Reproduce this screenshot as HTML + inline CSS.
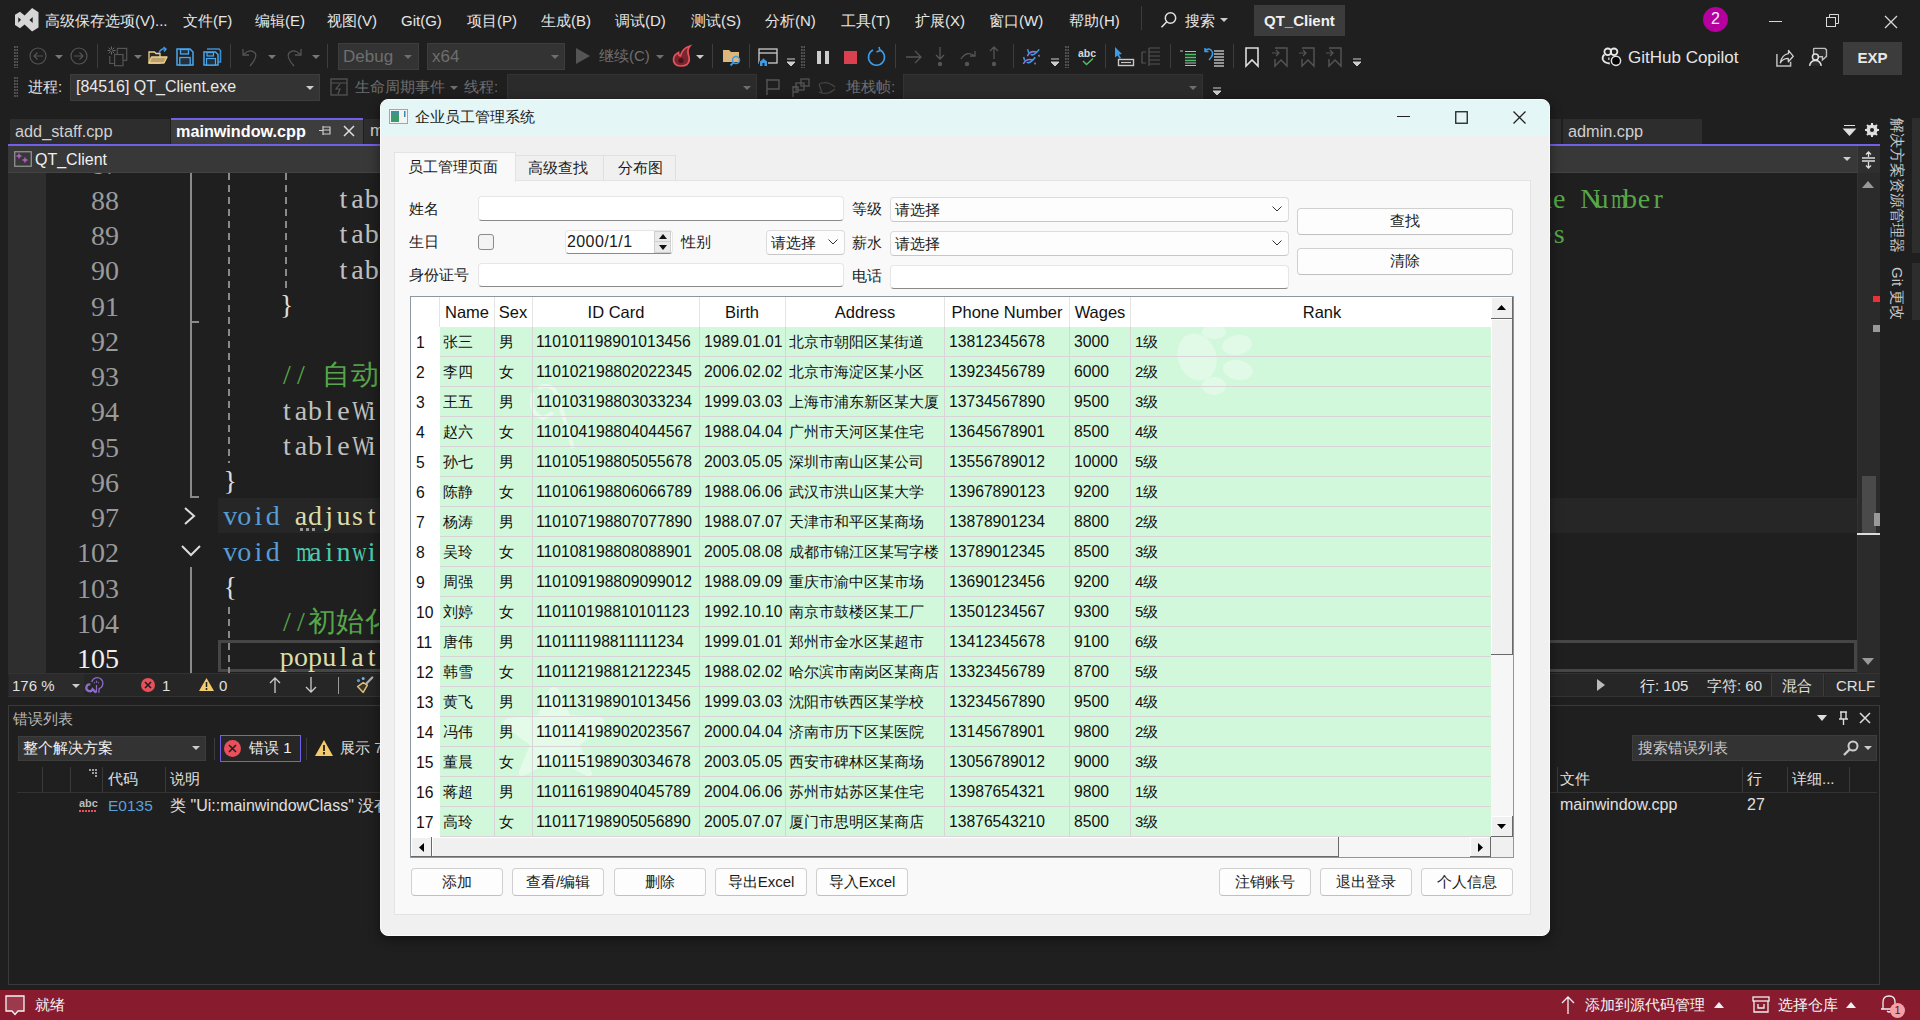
<!DOCTYPE html><html><head><meta charset="utf-8"><style>
*{box-sizing:border-box}
html,body{margin:0;padding:0}
body{width:1920px;height:1020px;overflow:hidden;position:relative;background:#1f1f1f;font-family:"Liberation Sans",sans-serif;color:#cccccc;font-size:15px}
.a{position:absolute;white-space:nowrap}
.b{position:absolute}
.mn{top:11px;font-size:15px;line-height:20px;color:#e6e6e6}
.tb{font-size:15px;line-height:20px}
.cb{position:absolute;background:#333333;border:1px solid #3d3d3d}
.sep{position:absolute;width:1px;background:#3d3d3d}
.code{font-family:"Liberation Mono",monospace;font-size:23px;line-height:35px}
.ln{font-family:"Liberation Serif",serif;font-size:28px;line-height:35px;color:#858585;text-align:right;width:60px}
svg{position:absolute;overflow:visible}
</style></head><body>
<svg style="left:10px;top:4px" width="34" height="32" viewBox="0 0 34 32"><path d="M5 10.7 L10 7.7 L14.6 11.6 L22.1 4.1 L28.5 8.15 V23.5 L22.1 27.6 L14.6 20.4 L10 24.3 L5 21 Z M8.3 13.2 L11 15.8 L8.3 18.8 Z M22.7 12.9 L19.4 16 L22.7 19.1 Z" fill="#d6d6d6" fill-rule="evenodd"/></svg>
<div class="a mn" style="left:45px">高级保存选项(V)...</div>
<div class="a mn" style="left:183px">文件(F)</div>
<div class="a mn" style="left:255px">编辑(E)</div>
<div class="a mn" style="left:327px">视图(V)</div>
<div class="a mn" style="left:401px">Git(G)</div>
<div class="a mn" style="left:467px">项目(P)</div>
<div class="a mn" style="left:541px">生成(B)</div>
<div class="a mn" style="left:615px">调试(D)</div>
<div class="a mn" style="left:691px">测试(S)</div>
<div class="a mn" style="left:765px">分析(N)</div>
<div class="a mn" style="left:841px">工具(T)</div>
<div class="a mn" style="left:915px">扩展(X)</div>
<div class="a mn" style="left:989px">窗口(W)</div>
<div class="a mn" style="left:1069px">帮助(H)</div>
<div class="sep" style="left:1141px;top:6px;height:24px"></div>
<svg style="left:1160px;top:11px" width="18" height="18" viewBox="0 0 18 18"><circle cx="10.5" cy="7" r="5.2" fill="none" stroke="#e0e0e0" stroke-width="1.5"/><path d="M6.8 10.8 L1.5 16.2" stroke="#e0e0e0" stroke-width="1.6"/></svg>
<div class="a mn" style="left:1185px">搜索</div>
<svg style="left:1220px;top:18px" width="8" height="5"><path d="M0 0 H8 L4 4 Z" fill="#cccccc"/></svg>
<div class="b" style="left:1254px;top:5px;width:91px;height:31px;background:#3c3c3c"></div>
<div class="a" style="left:1264px;top:11px;font-size:15px;line-height:20px;font-weight:bold;color:#f0f0f0">QT_Client</div>
<div class="b" style="left:1703px;top:7px;width:25px;height:25px;border-radius:50%;background:#b5009f"></div>
<div class="a" style="left:1703px;top:9px;width:25px;text-align:center;font-size:16px;line-height:20px;color:#f4f4f4">2</div>
<div class="b" style="left:1769px;top:21px;width:13px;height:1px;background:#d8d8d8"></div>
<svg style="left:1826px;top:14px" width="14" height="14" viewBox="0 0 14 14"><rect x="0.5" y="3.5" width="9" height="9" fill="none" stroke="#d8d8d8" stroke-width="1"/><path d="M3.5 3.5 V0.5 H12.5 V9.5 H9.5" fill="none" stroke="#d8d8d8" stroke-width="1"/></svg>
<svg style="left:1884px;top:15px" width="14" height="14" viewBox="0 0 14 14"><path d="M1 1 L13 13 M13 1 L1 13" stroke="#d8d8d8" stroke-width="1.3"/></svg>
<div class="b" style="left:14px;top:46px;width:4px;height:22px;background:radial-gradient(circle at 1px 1px,#555 0 0.9px,transparent 1px) 0 0/2.5px 3px"></div>
<svg style="left:29px;top:47px" width="18" height="18" viewBox="0 0 18 18"><circle cx="9" cy="9" r="8" fill="none" stroke="#555" stroke-width="1.2"/><path d="M14 9 H5 M8.5 5.5 L5 9 L8.5 12.5" fill="none" stroke="#555" stroke-width="1.2"/></svg>
<svg style="left:70px;top:47px" width="18" height="18" viewBox="0 0 18 18"><circle cx="9" cy="9" r="8" fill="none" stroke="#555" stroke-width="1.2"/><path d="M4 9 H13 M9.5 5.5 L13 9 L9.5 12.5" fill="none" stroke="#555" stroke-width="1.2"/></svg>
<svg style="left:55px;top:55px" width="8" height="5"><path d="M0 0 H8 L4 4 Z" fill="#777"/></svg>
<div class="sep" style="left:97px;top:44px;height:24px"></div>
<svg style="left:107px;top:46px" width="22" height="22" viewBox="0 0 22 22"><path d="M5.70 4.50 L8.50 4.50 M5.35 5.35 L7.33 7.33 M4.50 5.70 L4.50 8.50 M3.65 5.35 L1.67 7.33 M3.30 4.50 L0.50 4.50 M3.65 3.65 L1.67 1.67 M4.50 3.30 L4.50 0.50 M5.35 3.65 L7.33 1.67 " stroke="#6a6a6a" stroke-width="1"/><rect x="10.3" y="2.4" width="9.4" height="11.9" fill="none" stroke="#555" stroke-width="1.2"/><rect x="7.6" y="8.5" width="8.4" height="11.2" fill="#1f1f1f" stroke="#555" stroke-width="1.2"/><path d="M2.8 10 V17.5 H7.6" fill="none" stroke="#555" stroke-width="1.2"/></svg>
<svg style="left:134px;top:55px" width="8" height="5"><path d="M0 0 H8 L4 4 Z" fill="#777"/></svg>
<svg style="left:148px;top:47px" width="20" height="18" viewBox="0 0 20 18"><path d="M1 5 H6.5 L8 6.5 H12 V16 H1 Z" fill="#2a2a2a" stroke="#f0d08c" stroke-width="1.3"/><path d="M3.5 10 H19 L16 16 H1 Z" fill="#b8a070" stroke="#f0d08c" stroke-width="1.3" stroke-linejoin="round"/><path d="M11 6 Q13 1 18 2 M15.5 0 L18 2 L16 4.5" fill="none" stroke="#3c9ce8" stroke-width="1.5"/></svg>
<svg style="left:176px;top:48px" width="18" height="18" viewBox="0 0 18 18"><path d="M1 1 H14 L17 4 V17 H1 Z" fill="#1f1f1f" stroke="#4aa8f0" stroke-width="1.5"/><rect x="4.5" y="1.5" width="8" height="4.5" fill="#24313b" stroke="#4aa8f0" stroke-width="1.3"/><rect x="3.8" y="9.5" width="10.4" height="7.5" fill="#24313b" stroke="#4aa8f0" stroke-width="1.3"/></svg>
<svg style="left:203px;top:48px" width="18" height="18" viewBox="0 0 18 18"><path d="M4 1 H16 L17.5 2.5 V14 H15" fill="none" stroke="#3d8fd0" stroke-width="1.6"/><path d="M1 4 H12.5 L15 6.5 V17 H1 Z" fill="#1f1f1f" stroke="#4aa8f0" stroke-width="1.5"/><rect x="4" y="4.5" width="6.5" height="3.5" fill="#24313b" stroke="#4aa8f0" stroke-width="1.2"/><rect x="3.5" y="10.5" width="9" height="6.5" fill="#24313b" stroke="#4aa8f0" stroke-width="1.2"/></svg>
<div class="sep" style="left:230px;top:44px;height:24px"></div>
<svg style="left:241px;top:47px" width="18" height="20" viewBox="0 0 18 20"><path d="M2 2 V8 H8" fill="none" stroke="#555" stroke-width="1.3"/><path d="M2.5 7.5 Q9 1 14 6 Q17 10 9 19" fill="none" stroke="#555" stroke-width="1.3"/></svg>
<svg style="left:268px;top:55px" width="8" height="5"><path d="M0 0 H8 L4 4 Z" fill="#777"/></svg>
<svg style="left:285px;top:47px" width="18" height="20" viewBox="0 0 18 20"><path d="M16 2 V8 H10" fill="none" stroke="#555" stroke-width="1.3"/><path d="M15.5 7.5 Q9 1 4 6 Q1 10 9 19" fill="none" stroke="#555" stroke-width="1.3"/></svg>
<svg style="left:312px;top:55px" width="8" height="5"><path d="M0 0 H8 L4 4 Z" fill="#777"/></svg>
<div class="sep" style="left:327px;top:44px;height:24px"></div>
<div class="cb" style="left:338px;top:43px;width:81px;height:27px"></div>
<div class="a" style="left:343px;top:47px;font-size:17px;line-height:20px;color:#6e6e6e">Debug</div>
<svg style="left:404px;top:55px" width="8" height="5"><path d="M0 0 H8 L4 4 Z" fill="#6e6e6e"/></svg>
<div class="cb" style="left:427px;top:43px;width:138px;height:27px"></div>
<div class="a" style="left:432px;top:47px;font-size:17px;line-height:20px;color:#6e6e6e">x64</div>
<svg style="left:551px;top:55px" width="8" height="5"><path d="M0 0 H8 L4 4 Z" fill="#6e6e6e"/></svg>
<svg style="left:576px;top:48px" width="14" height="16"><path d="M0 0 L14 8 L0 16 Z" fill="#555"/></svg>
<div class="a tb" style="left:599px;top:46px;color:#6e6e6e">继续(C)</div>
<svg style="left:656px;top:55px" width="8" height="5"><path d="M0 0 H8 L4 4 Z" fill="#6e6e6e"/></svg>
<svg style="left:672px;top:45px" width="20" height="22" viewBox="0 0 20 22"><path d="M8.5 21 C3.5 21 1.2 17.5 1.5 14 C1.8 10.5 4.5 8.5 6.5 7.5 C6.5 9.5 7.5 11 8.5 11 C9.5 7 12.5 2.5 18 1 C15.5 4 15.5 7 16.5 10 C17.5 13 17.5 17 15 19.5 C13 21 10.5 21 8.5 21 Z" fill="#7a2630" stroke="#e8505b" stroke-width="1.7"/><circle cx="9" cy="15.5" r="2.6" fill="#4a1218"/></svg>
<svg style="left:696px;top:55px" width="8" height="5"><path d="M0 0 H8 L4 4 Z" fill="#ccc"/></svg>
<div class="sep" style="left:712px;top:44px;height:24px"></div>
<svg style="left:722px;top:48px" width="20" height="18" viewBox="0 0 20 18"><path d="M1 2 H7 L9 4 H17 V14 H1 Z" fill="#dcb67a"/><circle cx="14" cy="12" r="3.5" fill="none" stroke="#3c9ce8" stroke-width="1.5"/><path d="M11.5 14.5 L8.5 17.5" stroke="#3c9ce8" stroke-width="1.8"/></svg>
<div class="sep" style="left:749px;top:44px;height:24px"></div>
<svg style="left:758px;top:48px" width="20" height="19" viewBox="0 0 20 19"><rect x="1" y="1" width="18" height="14" fill="none" stroke="#ccc" stroke-width="1.3"/><path d="M1 5 H19" stroke="#ccc" stroke-width="1.3"/><path d="M1.5 18.5 V13.5 L5.5 10 L9.5 13.5 V18.5 Z" fill="#3c9ce8" stroke="#1f1f1f" stroke-width="1"/><rect x="4.5" y="15" width="2" height="3.5" fill="#1f1f1f"/></svg>
<svg style="left:787px;top:59px" width="8" height="8"><path d="M0 0 H8 M0 3 H8 L4 7 Z" stroke="#ccc" fill="#ccc" stroke-width="1"/></svg>
<div class="b" style="left:801px;top:46px;width:4px;height:22px;background:radial-gradient(circle at 1px 1px,#555 0 0.9px,transparent 1px) 0 0/2.5px 3px"></div>
<div class="b" style="left:817px;top:51px;width:4px;height:13px;background:#ccc"></div><div class="b" style="left:825px;top:51px;width:4px;height:13px;background:#ccc"></div>
<div class="b" style="left:844px;top:51px;width:13px;height:13px;background:#d94050"></div>
<svg style="left:867px;top:47px" width="20" height="20" viewBox="0 0 20 20"><path d="M13 3 A8 8 0 1 1 6 3" fill="none" stroke="#3c9ce8" stroke-width="1.6"/><path d="M12 0 L13 3.5 L9.5 5" fill="none" stroke="#3c9ce8" stroke-width="1.6"/></svg>
<div class="sep" style="left:895px;top:44px;height:24px"></div>
<svg style="left:905px;top:50px" width="18" height="14"><path d="M1 7 H16 M10 1 L16 7 L10 13" fill="none" stroke="#555" stroke-width="1.3"/></svg>
<svg style="left:934px;top:46px" width="12" height="22"><path d="M6 1 V13 M2 9 L6 13 L10 9" fill="none" stroke="#555" stroke-width="1.3"/><circle cx="6" cy="18" r="2.2" fill="#555"/></svg>
<svg style="left:958px;top:48px" width="20" height="20"><path d="M3 11 Q9 2 17 8 M17 3 V8 H12" fill="none" stroke="#555" stroke-width="1.3"/><circle cx="9" cy="16" r="2.2" fill="#555"/></svg>
<svg style="left:988px;top:46px" width="12" height="22"><path d="M6 13 V1 M2 5 L6 1 L10 5" fill="none" stroke="#555" stroke-width="1.3"/><circle cx="6" cy="18" r="2.2" fill="#555"/></svg>
<div class="sep" style="left:1013px;top:44px;height:24px"></div>
<svg style="left:1018px;top:44px" width="28" height="24" viewBox="0 0 28 24"><path d="M9.4 12.2 Q12 6 19 8.2" fill="none" stroke="#9a6fd8" stroke-width="1.5"/><path d="M20.6 10.8 L21.5 12.6" stroke="#9a6fd8" stroke-width="1.5"/><path d="M12.7 10.4 Q16 12.5 21.2 5.4" fill="none" stroke="#3c9ce8" stroke-width="1.6"/><path d="M9.6 5.2 L10.7 8.8" stroke="#3c9ce8" stroke-width="1.5"/><path d="M5.4 20.0 Q8 13.8 15 16.0" fill="none" stroke="#9a6fd8" stroke-width="1.5"/><path d="M16.6 18.6 L17.5 20.4" stroke="#9a6fd8" stroke-width="1.5"/><path d="M8.7 18.2 Q12 20.3 17.2 13.2" fill="none" stroke="#3c9ce8" stroke-width="1.6"/><path d="M5.6 13.0 L6.699999999999999 16.6" stroke="#3c9ce8" stroke-width="1.5"/></svg>
<svg style="left:1051px;top:59px" width="8" height="8"><path d="M0 0 H8 M0 3 H8 L4 7 Z" stroke="#ccc" fill="#ccc" stroke-width="1"/></svg>
<div class="b" style="left:1065px;top:46px;width:4px;height:22px;background:radial-gradient(circle at 1px 1px,#555 0 0.9px,transparent 1px) 0 0/2.5px 3px"></div>
<div class="a" style="left:1078px;top:47px;font-size:10.5px;line-height:12px;font-weight:bold;color:#d8d8d8">abc</div>
<svg style="left:1082px;top:58px" width="14" height="8"><path d="M1 3 L4.5 6.5 L11 0.5" fill="none" stroke="#4cbf6a" stroke-width="1.5"/></svg>
<div class="sep" style="left:1105px;top:44px;height:24px"></div>
<svg style="left:1114px;top:47px" width="22" height="20" viewBox="0 0 22 20"><path d="M1 0 L8 7 L5 7.5 L7 11 L5.5 11.8 L3.5 8.5 L1 10.5 Z" fill="#3c9ce8"/><rect x="4.5" y="12.5" width="15" height="6" fill="none" stroke="#c8c8c8" stroke-width="1.4"/><path d="M7 15.5 H17" stroke="#c8c8c8" stroke-width="1.2"/></svg>
<svg style="left:1141px;top:47px" width="20" height="20"><path d="M1 5 H5 M1 5 V16 H5 M8 1 H19 M8 5 H19 M8 9 H19 M8 13 H19 M8 17 H19 M8 1 V19" fill="none" stroke="#555" stroke-width="1.2"/></svg>
<div class="sep" style="left:1170px;top:44px;height:24px"></div>
<svg style="left:1180px;top:50px" width="17" height="16" viewBox="0 0 17 16"><path d="M0 1 H3 M5 1.5 H16" stroke="#bbb" stroke-width="1.2"/><path d="M5 4.5 H16 M5 7.5 H16 M5 10.5 H16" stroke="#4cbf6a" stroke-width="1.6"/><path d="M5 13 H16 M5 15.5 H16" stroke="#bbb" stroke-width="1.2"/></svg>
<svg style="left:1204px;top:47px" width="22" height="20" viewBox="0 0 22 20"><path d="M10 4 H20 M10 7 H20 M10 10 H20 M10 13 H20 M10 16 H20 M10 19 H20" stroke="#bbb" stroke-width="1.3"/><path d="M5 13 Q11 7 7 3 Q4 0.5 1 4 M1 1 V4.5 H4.5" fill="none" stroke="#3c9ce8" stroke-width="1.5"/></svg>
<div class="sep" style="left:1233px;top:44px;height:24px"></div>
<svg style="left:1245px;top:47px" width="14" height="20"><path d="M1 1 H13 V19 L7 13 L1 19 Z" fill="none" stroke="#ddd" stroke-width="1.6"/></svg>
<svg style="left:1272px;top:47px" width="16" height="20"><path d="M3 1 H15 V19 L9 13 L3 19 V12" fill="none" stroke="#555" stroke-width="1.4"/><path d="M0 6 H7 M4 3 L7 6 L4 9" fill="none" stroke="#555" stroke-width="1.2"/></svg>
<svg style="left:1299px;top:47px" width="16" height="20"><path d="M3 1 H15 V19 L9 13 L3 19 V12" fill="none" stroke="#555" stroke-width="1.4"/><path d="M0 6 H7 M4 3 L7 6 L4 9" fill="none" stroke="#555" stroke-width="1.2"/></svg>
<svg style="left:1326px;top:47px" width="16" height="20"><path d="M3 1 H15 V19 L9 13 L3 19 V12" fill="none" stroke="#555" stroke-width="1.4"/><path d="M0 6 H7 M4 3 L7 6 L4 9" fill="none" stroke="#555" stroke-width="1.2"/></svg>
<svg style="left:1353px;top:59px" width="8" height="8"><path d="M0 0 H8 M0 3 H8 L4 7 Z" stroke="#ccc" fill="#ccc" stroke-width="1"/></svg>
<svg style="left:1596px;top:42px" width="32" height="30" viewBox="0 0 32 30"><ellipse cx="11.8" cy="9.8" rx="3.4" ry="3.3" fill="none" stroke="#e8e8e8" stroke-width="1.8"/><ellipse cx="18" cy="9.8" rx="3.4" ry="3.3" fill="none" stroke="#e8e8e8" stroke-width="1.8"/><path d="M8.5 12.5 Q6 14.5 6.8 17.5 Q8 21 13.8 21.5" fill="none" stroke="#e8e8e8" stroke-width="1.8"/><rect x="12" y="15.5" width="1.6" height="2.4" fill="#bbb"/><circle cx="20" cy="18.8" r="4.6" fill="#000" stroke="#e0e0e0" stroke-width="1.5"/></svg>
<div class="a" style="left:1628px;top:48px;font-size:17px;line-height:20px;color:#e6e6e6">GitHub Copilot</div>
<svg style="left:1770px;top:42px" width="66" height="30" viewBox="0 0 66 30"><path d="M6.9 12 V24 H20.6 V19.8" fill="none" stroke="#bdbdbd" stroke-width="1.5"/><path d="M10.3 20.8 Q12 12.5 18.5 11.6 V8.3 L23.3 14.3 L18.3 19.8 V16.4 Q13 16.4 10.3 20.8 Z" fill="none" stroke="#d0d0d0" stroke-width="1.3" stroke-linejoin="round"/><path d="M43.6 13 V7 Q43.6 6.4 44.2 6.4 H55 L56.5 7.9 V14.4 L52.4 18 V14.8 H49" fill="#2b2b2b" stroke="#bdbdbd" stroke-width="1.4"/><circle cx="45.4" cy="15" r="3" fill="#2b2b2b" stroke="#e0e0e0" stroke-width="1.5"/><path d="M39.6 23.8 Q40.5 18.5 45.4 18.5 Q50.3 18.5 51.3 23.8" fill="#2b2b2b" stroke="#e0e0e0" stroke-width="1.5"/></svg>
<div class="b" style="left:1843px;top:42px;width:59px;height:33px;background:#3c3c3c"></div>
<div class="a" style="left:1843px;top:48px;width:59px;text-align:center;font-size:15px;line-height:20px;font-weight:bold;color:#e8e8e8">EXP</div>
<div class="b" style="left:14px;top:77px;width:4px;height:20px;background:radial-gradient(circle at 1px 1px,#555 0 0.9px,transparent 1px) 0 0/2.5px 3px"></div>
<div class="a tb" style="left:28px;top:77px;color:#e0e0e0">进程:</div>
<div class="cb" style="left:70px;top:74px;width:250px;height:27px;background:#333"></div>
<div class="a" style="left:76px;top:77px;font-size:16px;line-height:20px;color:#e8e8e8">[84516] QT_Client.exe</div>
<svg style="left:306px;top:86px" width="8" height="5"><path d="M0 0 H8 L4 4 Z" fill="#ccc"/></svg>
<svg style="left:330px;top:78px" width="18" height="18"><rect x="1" y="1" width="16" height="16" fill="none" stroke="#555" stroke-width="1.3"/><path d="M1 5 H17 M10 6 L6 11 H10 L8 16" fill="none" stroke="#555" stroke-width="1.2"/></svg>
<div class="a tb" style="left:355px;top:77px;color:#6e6e6e">生命周期事件</div>
<svg style="left:450px;top:86px" width="8" height="5"><path d="M0 0 H8 L4 4 Z" fill="#6e6e6e"/></svg>
<div class="a tb" style="left:464px;top:77px;color:#6e6e6e">线程:</div>
<div class="cb" style="left:507px;top:74px;width:250px;height:27px;background:#2b2b2b;border-color:#333"></div>
<svg style="left:743px;top:86px" width="8" height="5"><path d="M0 0 H8 L4 4 Z" fill="#6e6e6e"/></svg>
<svg style="left:765px;top:78px" width="18" height="18"><path d="M2 1 V17 M2 2 H14 V11 H2" fill="none" stroke="#555" stroke-width="1.4"/></svg>
<svg style="left:791px;top:78px" width="20" height="20"><rect x="10" y="1" width="8" height="7" fill="none" stroke="#555" stroke-width="1.3"/><rect x="5" y="5" width="8" height="7" fill="none" stroke="#555" stroke-width="1.3"/><path d="M2 8 V19 M2 9 H7 V14 H2" fill="none" stroke="#555" stroke-width="1.3"/></svg>
<svg style="left:818px;top:81px" width="18" height="14"><path d="M1 3 Q9 -1 17 6 M1 11 Q9 15 17 8 M1 3 L4 12" fill="none" stroke="#444" stroke-width="1.3"/></svg>
<div class="a tb" style="left:846px;top:77px;color:#6e6e6e">堆栈帧:</div>
<div class="cb" style="left:903px;top:74px;width:300px;height:27px;background:#2b2b2b;border-color:#333"></div>
<svg style="left:1189px;top:86px" width="8" height="5"><path d="M0 0 H8 L4 4 Z" fill="#6e6e6e"/></svg>
<svg style="left:1213px;top:88px" width="8" height="8"><path d="M0 0 H8 M0 3 H8 L4 7 Z" stroke="#ccc" fill="#ccc" stroke-width="1"/></svg>
<div class="b" style="left:10px;top:119px;width:160px;height:25px;background:#2d2d2d"></div>
<div class="a" style="left:15px;top:121px;font-size:16.3px;line-height:20px;color:#d0d0d0">add_staff.cpp</div>
<div class="b" style="left:171px;top:118px;width:192px;height:26px;background:#3d3d3d;border-top:2px solid #7160e8"></div>
<div class="a" style="left:176px;top:121px;font-size:16.2px;line-height:20px;font-weight:bold;color:#ffffff">mainwindow.cpp</div>
<svg style="left:319px;top:125px" width="12" height="11"><path d="M0 5.5 H4 M4 1 V10 M4 2 H11 V9 H4 M4 5 H11" fill="none" stroke="#ccc" stroke-width="1.2"/></svg>
<svg style="left:343px;top:125px" width="12" height="12"><path d="M1 1 L11 11 M11 1 L1 11" stroke="#ddd" stroke-width="1.5"/></svg>
<div class="b" style="left:364px;top:119px;width:20px;height:25px;background:#2d2d2d"></div>
<div class="a" style="left:370px;top:121px;font-size:17px;line-height:20px;color:#d0d0d0">m</div>
<div class="b" style="left:1540px;top:119px;width:21px;height:25px;background:#2d2d2d"></div>
<div class="b" style="left:1563px;top:119px;width:139px;height:25px;background:#2d2d2d"></div>
<div class="a" style="left:1568px;top:121px;font-size:16.3px;line-height:20px;color:#d0d0d0">admin.cpp</div>
<svg style="left:1844px;top:125px" width="11" height="12"><path d="M0 0.5 H11 M0 4 H11 L5.5 10 Z" stroke="#e0e0e0" fill="#e0e0e0" stroke-width="1.2"/></svg>
<svg style="left:1865px;top:123px" width="14" height="14" viewBox="0 0 14 14"><circle cx="7" cy="7" r="4.2" fill="none" stroke="#e0e0e0" stroke-width="2.6"/><path d="M7 0 V14 M0 7 H14 M2 2 L12 12 M12 2 L2 12" stroke="#e0e0e0" stroke-width="2"/><circle cx="7" cy="7" r="2" fill="#1f1f1f"/></svg>
<div class="b" style="left:8px;top:144px;width:1872px;height:2px;background:#7160e8"></div>
<div class="b" style="left:8px;top:146px;width:1849px;height:27px;background:#383838;border-bottom:1px solid #434343"></div>
<svg style="left:14px;top:151px" width="18" height="16"><rect x="0.75" y="0.75" width="16.5" height="14.5" fill="none" stroke="#999" stroke-width="1.2"/><path d="M5 2.5 V7.5 M2.5 5 H7.5 M11 6.5 V11.5 M8.5 9 H13.5" stroke="#c05ccf" stroke-width="1.4"/></svg>
<div class="a" style="left:35px;top:150px;font-size:16px;line-height:20px;color:#f0f0f0">QT_Client</div>
<svg style="left:1843px;top:157px" width="8" height="5"><path d="M0 0 H8 L4 4 Z" fill="#ccc"/></svg>
<div class="b" style="left:1857px;top:146px;width:23px;height:27px;background:#2f2f2f;border-left:1px solid #3d3d3d"></div>
<svg style="left:1861px;top:152px" width="15" height="16"><path d="M1 6 H14 M1 9 H14 M7.5 0 V5 M7.5 10 V16 M5 2.5 L7.5 0 L10 2.5 M5 13.5 L7.5 16 L10 13.5" fill="none" stroke="#ddd" stroke-width="1.3"/></svg>
<div class="b" style="left:8px;top:173px;width:38px;height:500px;background:#2e2e2e"></div>
<div class="b" style="left:218px;top:498px;width:170px;height:35px;background:#262626"></div>
<div class="b" style="left:218px;top:640px;width:170px;height:32px;border:3px solid #464646;border-right:none"></div>
<div class="b" style="left:1550px;top:640px;width:307px;height:32px;border:3px solid #464646;border-left:none"></div>
<div class="b" style="left:1550px;top:498px;width:307px;height:35px;background:#262626"></div>
<div class="b" style="left:46px;top:173px;width:342px;height:500px;overflow:hidden">
<div class="a ln" style="left:13px;top:-25.6px;color:#9a9a9a">87</div>
<div class="a ln" style="left:13px;top:9.7px;color:#9a9a9a">88</div>
<div class="a ln" style="left:13px;top:45.0px;color:#9a9a9a">89</div>
<div class="a ln" style="left:13px;top:80.2px;color:#9a9a9a">90</div>
<div class="a ln" style="left:13px;top:115.5px;color:#9a9a9a">91</div>
<div class="a ln" style="left:13px;top:150.7px;color:#9a9a9a">92</div>
<div class="a ln" style="left:13px;top:186.0px;color:#9a9a9a">93</div>
<div class="a ln" style="left:13px;top:221.3px;color:#9a9a9a">94</div>
<div class="a ln" style="left:13px;top:256.5px;color:#9a9a9a">95</div>
<div class="a ln" style="left:13px;top:291.8px;color:#9a9a9a">96</div>
<div class="a ln" style="left:13px;top:327.0px;color:#9a9a9a">97</div>
<div class="a ln" style="left:13px;top:362.3px;color:#9a9a9a">102</div>
<div class="a ln" style="left:13px;top:397.6px;color:#9a9a9a">103</div>
<div class="a ln" style="left:13px;top:432.8px;color:#9a9a9a">104</div>
<div class="a ln" style="left:13px;top:468.1px;color:#f0f0f0">105</div>
</div>
<div class="b" style="left:190px;top:173px;width:2px;height:149px;background:#8a8a8a"></div>
<div class="b" style="left:190px;top:321px;width:9px;height:2px;background:#8a8a8a"></div>
<div class="b" style="left:190px;top:323px;width:2px;height:175px;background:#8a8a8a"></div>
<div class="b" style="left:190px;top:496px;width:9px;height:2px;background:#8a8a8a"></div>
<div class="b" style="left:190px;top:567px;width:2px;height:106px;background:#8a8a8a"></div>
<svg style="left:184px;top:507px" width="12" height="18"><path d="M1 1 L10 9 L1 17" fill="none" stroke="#ddd" stroke-width="2"/></svg>
<svg style="left:181px;top:545px" width="20" height="12"><path d="M1 1 L10 10 L19 1" fill="none" stroke="#ddd" stroke-width="2"/></svg>
<div class="b" style="left:228px;top:173px;width:2px;height:290px;background:repeating-linear-gradient(#8a8a8a 0 7px,transparent 7px 12px)"></div>
<div class="b" style="left:285px;top:173px;width:2px;height:115px;background:repeating-linear-gradient(#8a8a8a 0 7px,transparent 7px 12px)"></div>
<div class="b" style="left:228px;top:607px;width:2px;height:66px;background:repeating-linear-gradient(#8a8a8a 0 7px,transparent 7px 12px)"></div>
<div class="b" style="left:0;top:173px;width:379px;height:500px;overflow:hidden"><div class="b" style="left:0;top:-173px;width:380px;height:673px;font-family:'Liberation Serif',serif;font-size:28px;line-height:35px">
<span class="a" style="left:336.3px;top:181.0px;width:14.2px;text-align:center;color:#c0c0c0;">t</span><span class="a" style="left:350.4px;top:181.0px;width:14.2px;text-align:center;color:#c0c0c0;">a</span><span class="a" style="left:364.6px;top:181.0px;width:14.2px;text-align:center;color:#c0c0c0;">b</span><span class="a" style="left:378.8px;top:181.0px;width:14.2px;text-align:center;color:#c0c0c0;">l</span>
<span class="a" style="left:336.3px;top:216.3px;width:14.2px;text-align:center;color:#c0c0c0;">t</span><span class="a" style="left:350.4px;top:216.3px;width:14.2px;text-align:center;color:#c0c0c0;">a</span><span class="a" style="left:364.6px;top:216.3px;width:14.2px;text-align:center;color:#c0c0c0;">b</span><span class="a" style="left:378.8px;top:216.3px;width:14.2px;text-align:center;color:#c0c0c0;">l</span>
<span class="a" style="left:336.3px;top:251.5px;width:14.2px;text-align:center;color:#c0c0c0;">t</span><span class="a" style="left:350.4px;top:251.5px;width:14.2px;text-align:center;color:#c0c0c0;">a</span><span class="a" style="left:364.6px;top:251.5px;width:14.2px;text-align:center;color:#c0c0c0;">b</span><span class="a" style="left:378.8px;top:251.5px;width:14.2px;text-align:center;color:#c0c0c0;">l</span>
<span class="a" style="left:279.7px;top:286.8px;width:14.2px;text-align:center;color:#dcdcdc;">}</span>
<span class="a" style="left:279.7px;top:357.3px;width:14.2px;text-align:center;color:#57a64a;">/</span><span class="a" style="left:293.9px;top:357.3px;width:14.2px;text-align:center;color:#57a64a;">/</span><span class="a" style="left:322.1px;top:357.3px;width:28.3px;text-align:center;color:#57a64a;">自</span><span class="a" style="left:350.4px;top:357.3px;width:28.3px;text-align:center;color:#57a64a;">动</span><span class="a" style="left:378.8px;top:357.3px;width:28.3px;text-align:center;color:#57a64a;">调</span>
<span class="a" style="left:279.7px;top:392.6px;width:14.2px;text-align:center;color:#c0c0c0;">t</span><span class="a" style="left:293.9px;top:392.6px;width:14.2px;text-align:center;color:#c0c0c0;">a</span><span class="a" style="left:308.0px;top:392.6px;width:14.2px;text-align:center;color:#c0c0c0;">b</span><span class="a" style="left:322.1px;top:392.6px;width:14.2px;text-align:center;color:#c0c0c0;">l</span><span class="a" style="left:336.3px;top:392.6px;width:14.2px;text-align:center;color:#c0c0c0;">e</span><span class="a" style="left:350.4px;top:392.6px;width:14.2px;text-align:center;color:#c0c0c0;transform:scaleX(0.7);">W</span><span class="a" style="left:364.6px;top:392.6px;width:14.2px;text-align:center;color:#c0c0c0;">i</span><span class="a" style="left:378.8px;top:392.6px;width:14.2px;text-align:center;color:#c0c0c0;">d</span>
<span class="a" style="left:279.7px;top:427.8px;width:14.2px;text-align:center;color:#c0c0c0;">t</span><span class="a" style="left:293.9px;top:427.8px;width:14.2px;text-align:center;color:#c0c0c0;">a</span><span class="a" style="left:308.0px;top:427.8px;width:14.2px;text-align:center;color:#c0c0c0;">b</span><span class="a" style="left:322.1px;top:427.8px;width:14.2px;text-align:center;color:#c0c0c0;">l</span><span class="a" style="left:336.3px;top:427.8px;width:14.2px;text-align:center;color:#c0c0c0;">e</span><span class="a" style="left:350.4px;top:427.8px;width:14.2px;text-align:center;color:#c0c0c0;transform:scaleX(0.7);">W</span><span class="a" style="left:364.6px;top:427.8px;width:14.2px;text-align:center;color:#c0c0c0;">i</span><span class="a" style="left:378.8px;top:427.8px;width:14.2px;text-align:center;color:#c0c0c0;">d</span>
<span class="a" style="left:223.1px;top:463.1px;width:14.2px;text-align:center;color:#dcdcdc;">}</span>
<span class="a" style="left:223.1px;top:498.3px;width:14.2px;text-align:center;color:#569cd6;">v</span><span class="a" style="left:237.2px;top:498.3px;width:14.2px;text-align:center;color:#569cd6;">o</span><span class="a" style="left:251.4px;top:498.3px;width:14.2px;text-align:center;color:#569cd6;">i</span><span class="a" style="left:265.6px;top:498.3px;width:14.2px;text-align:center;color:#569cd6;">d</span><span class="a" style="left:293.9px;top:498.3px;width:14.2px;text-align:center;color:#dcdcaa;">a</span><span class="a" style="left:308.0px;top:498.3px;width:14.2px;text-align:center;color:#dcdcaa;">d</span><span class="a" style="left:322.1px;top:498.3px;width:14.2px;text-align:center;color:#dcdcaa;">j</span><span class="a" style="left:336.3px;top:498.3px;width:14.2px;text-align:center;color:#dcdcaa;">u</span><span class="a" style="left:350.4px;top:498.3px;width:14.2px;text-align:center;color:#dcdcaa;">s</span><span class="a" style="left:364.6px;top:498.3px;width:14.2px;text-align:center;color:#dcdcaa;">t</span><span class="a" style="left:378.8px;top:498.3px;width:14.2px;text-align:center;color:#dcdcaa;">T</span>
<span class="a" style="left:223.1px;top:533.6px;width:14.2px;text-align:center;color:#569cd6;">v</span><span class="a" style="left:237.2px;top:533.6px;width:14.2px;text-align:center;color:#569cd6;">o</span><span class="a" style="left:251.4px;top:533.6px;width:14.2px;text-align:center;color:#569cd6;">i</span><span class="a" style="left:265.6px;top:533.6px;width:14.2px;text-align:center;color:#569cd6;">d</span><span class="a" style="left:293.9px;top:533.6px;width:14.2px;text-align:center;color:#4ec9b0;transform:scaleX(0.7);">m</span><span class="a" style="left:308.0px;top:533.6px;width:14.2px;text-align:center;color:#4ec9b0;">a</span><span class="a" style="left:322.1px;top:533.6px;width:14.2px;text-align:center;color:#4ec9b0;">i</span><span class="a" style="left:336.3px;top:533.6px;width:14.2px;text-align:center;color:#4ec9b0;">n</span><span class="a" style="left:350.4px;top:533.6px;width:14.2px;text-align:center;color:#4ec9b0;transform:scaleX(0.7);">w</span><span class="a" style="left:364.6px;top:533.6px;width:14.2px;text-align:center;color:#4ec9b0;">i</span><span class="a" style="left:378.8px;top:533.6px;width:14.2px;text-align:center;color:#4ec9b0;">n</span>
<span class="a" style="left:223.1px;top:568.9px;width:14.2px;text-align:center;color:#dcdcdc;">{</span>
<span class="a" style="left:279.7px;top:604.1px;width:14.2px;text-align:center;color:#57a64a;">/</span><span class="a" style="left:293.9px;top:604.1px;width:14.2px;text-align:center;color:#57a64a;">/</span><span class="a" style="left:308.0px;top:604.1px;width:28.3px;text-align:center;color:#57a64a;">初</span><span class="a" style="left:336.3px;top:604.1px;width:28.3px;text-align:center;color:#57a64a;">始</span><span class="a" style="left:364.6px;top:604.1px;width:28.3px;text-align:center;color:#57a64a;">化</span>
<span class="a" style="left:279.7px;top:639.4px;width:14.2px;text-align:center;color:#dcdcaa;">p</span><span class="a" style="left:293.9px;top:639.4px;width:14.2px;text-align:center;color:#dcdcaa;">o</span><span class="a" style="left:308.0px;top:639.4px;width:14.2px;text-align:center;color:#dcdcaa;">p</span><span class="a" style="left:322.1px;top:639.4px;width:14.2px;text-align:center;color:#dcdcaa;">u</span><span class="a" style="left:336.3px;top:639.4px;width:14.2px;text-align:center;color:#dcdcaa;">l</span><span class="a" style="left:350.4px;top:639.4px;width:14.2px;text-align:center;color:#dcdcaa;">a</span><span class="a" style="left:364.6px;top:639.4px;width:14.2px;text-align:center;color:#dcdcaa;">t</span><span class="a" style="left:378.8px;top:639.4px;width:14.2px;text-align:center;color:#dcdcaa;">e</span>
</div></div>
<div class="b" style="left:300px;top:528px;width:18px;height:3px;background:repeating-linear-gradient(90deg,#999 0 3px,transparent 3px 6px)"></div>
<div class="b" style="left:1550px;top:173px;width:307px;height:500px;overflow:hidden">
<div class="b" style="left:0;top:-173px;width:307px;height:673px;font-family:'Liberation Serif',serif;font-size:28px;line-height:35px">
<span class="a" style="left:-12.2px;top:181.0px;width:14.2px;text-align:center;color:#57a64a;">n</span><span class="a" style="left:2.0px;top:181.0px;width:14.2px;text-align:center;color:#57a64a;">e</span><span class="a" style="left:30.3px;top:181.0px;width:14.2px;text-align:center;color:#57a64a;">N</span><span class="a" style="left:44.5px;top:181.0px;width:14.2px;text-align:center;color:#57a64a;">u</span><span class="a" style="left:58.6px;top:181.0px;width:14.2px;text-align:center;color:#57a64a;transform:scaleX(0.7);">m</span><span class="a" style="left:72.8px;top:181.0px;width:14.2px;text-align:center;color:#57a64a;">b</span><span class="a" style="left:86.9px;top:181.0px;width:14.2px;text-align:center;color:#57a64a;">e</span><span class="a" style="left:101.0px;top:181.0px;width:14.2px;text-align:center;color:#57a64a;">r</span>
<span class="a" style="left:-12.2px;top:216.3px;width:14.2px;text-align:center;color:#57a64a;">e</span><span class="a" style="left:2.0px;top:216.3px;width:14.2px;text-align:center;color:#57a64a;">s</span>
</div>
</div>
<div class="b" style="left:1857px;top:173px;width:23px;height:500px;background:#2b2b2b;border-left:1px solid #333"></div>
<svg style="left:1862px;top:181px" width="12" height="7"><path d="M0 7 L6 0 L12 7 Z" fill="#999"/></svg>
<svg style="left:1862px;top:658px" width="12" height="7"><path d="M0 0 L6 7 L12 0 Z" fill="#999"/></svg>
<div class="b" style="left:1873px;top:296px;width:7px;height:6px;background:#f03030"></div>
<div class="b" style="left:1873px;top:325px;width:7px;height:7px;background:#999"></div>
<div class="b" style="left:1862px;top:476px;width:14px;height:58px;background:#4a4a4a"></div>
<div class="b" style="left:1874px;top:513px;width:6px;height:13px;background:#999"></div>
<div class="b" style="left:1857px;top:533px;width:23px;height:2px;background:#ddd"></div>
<div class="b" style="left:8px;top:673px;width:1872px;height:24px;background:#262626;border-top:1px solid #333;border-bottom:1px solid #333"></div>
<div class="b" style="left:9px;top:674px;width:75px;height:22px;background:#2b2b2b"></div>
<div class="a" style="left:12px;top:676px;font-size:15px;line-height:20px;color:#e0e0e0">176 %</div>
<svg style="left:72px;top:684px" width="8" height="5"><path d="M0 0 H8 L4 4 Z" fill="#ccc"/></svg>
<svg style="left:84px;top:672px" width="30" height="26" viewBox="0 0 30 26"><path d="M7.8 10 A5.6 5.6 0 1 1 15.2 16.5 L14.8 20.8" fill="none" stroke="#8e6cc8" stroke-width="1.3"/><path d="M12.5 8.8 V10.8 M10.3 10.4 L10.6 11.4 M14.6 10.4 L14.3 11.4 M12.5 13 V20.5" fill="none" stroke="#8e6cc8" stroke-width="1.2"/><path d="M6.4 12.6 A3.3 3.3 0 1 0 8.6 17.2 L12 20.6" fill="none" stroke="#8e6cc8" stroke-width="2.3"/></svg>
<svg style="left:141px;top:678px" width="14" height="14"><circle cx="7" cy="7" r="7" fill="#e8505b"/><path d="M4 4 L10 10 M10 4 L4 10" stroke="#1f1f1f" stroke-width="1.6"/></svg>
<div class="a" style="left:162px;top:676px;font-size:15px;line-height:20px;color:#e0e0e0">1</div>
<svg style="left:199px;top:678px" width="15" height="13"><path d="M7.5 0 L15 13 H0 Z" fill="#f3cb6b"/><path d="M7.5 4 V9 M7.5 10 V12" stroke="#1f1f1f" stroke-width="1.5"/></svg>
<div class="a" style="left:219px;top:676px;font-size:15px;line-height:20px;color:#e0e0e0">0</div>
<svg style="left:269px;top:677px" width="12" height="16"><path d="M6 16 V1 M1 6 L6 1 L11 6" fill="none" stroke="#ccc" stroke-width="1.3"/></svg>
<svg style="left:305px;top:677px" width="12" height="16"><path d="M6 0 V15 M1 10 L6 15 L11 10" fill="none" stroke="#ccc" stroke-width="1.3"/></svg>
<div class="b" style="left:338px;top:677px;width:1px;height:17px;background:#999"></div>
<svg style="left:350px;top:670px" width="30" height="28" viewBox="0 0 30 28"><path d="M22.3 7.5 L16.2 13.8" stroke="#b0b0b0" stroke-width="2.2" stroke-linecap="round"/><path d="M7.6 16.6 L13.2 12.6 L17.4 15.2 L13.2 22.4 Z" fill="#3a3526" stroke="#d8be7a" stroke-width="1.5" stroke-linejoin="round"/><circle cx="8.5" cy="10.6" r="1.6" fill="#4a9fe0"/><circle cx="13.2" cy="8.6" r="1.5" fill="#7aaedf"/></svg>
<svg style="left:1597px;top:679px" width="8" height="12"><path d="M0 0 L8 6 L0 12 Z" fill="#bbb"/></svg>
<div class="a" style="left:1640px;top:676px;font-size:15px;line-height:20px;color:#e0e0e0">行: 105</div>
<div class="a" style="left:1707px;top:676px;font-size:15px;line-height:20px;color:#e0e0e0">字符: 60</div>
<div class="b" style="left:1771px;top:674px;width:53px;height:22px;border-left:1px solid #3d3d3d;border-right:1px solid #3d3d3d;background:#2b2b2b"></div>
<div class="a" style="left:1782px;top:676px;font-size:15px;line-height:20px;color:#e0e0e0">混合</div>
<div class="b" style="left:1825px;top:674px;width:55px;height:22px;background:#2b2b2b"></div>
<div class="a" style="left:1836px;top:676px;font-size:15px;line-height:20px;color:#e0e0e0">CRLF</div>
<div class="b" style="left:8px;top:705px;width:1872px;height:280px;border:1px solid #3a3a3a;background:#1f1f1f"></div>
<div class="a" style="left:13px;top:709px;font-size:15px;line-height:20px;color:#b8b8b8">错误列表</div>
<svg style="left:1817px;top:715px" width="10" height="6"><path d="M0 0 H10 L5 6 Z" fill="#ddd"/></svg>
<svg style="left:1838px;top:711px" width="11" height="14"><path d="M2 1 H9 M3 1 V8 H8 V1 M1 8 H10 M5.5 8 V14" fill="none" stroke="#ddd" stroke-width="1.4"/></svg>
<svg style="left:1859px;top:712px" width="12" height="12"><path d="M1 1 L11 11 M11 1 L1 11" stroke="#ddd" stroke-width="1.5"/></svg>
<div class="b" style="left:18px;top:736px;width:188px;height:25px;background:#333;border:1px solid #3d3d3d"></div>
<div class="a" style="left:23px;top:738px;font-size:15px;line-height:20px;color:#f0f0f0">整个解决方案</div>
<svg style="left:192px;top:746px" width="8" height="5"><path d="M0 0 H8 L4 4 Z" fill="#ccc"/></svg>
<div class="b" style="left:214px;top:738px;width:1px;height:22px;background:#3d3d3d"></div>
<div class="b" style="left:220px;top:735px;width:81px;height:27px;border:1px solid #7160e8;background:#262626"></div>
<svg style="left:224px;top:740px" width="17" height="17"><circle cx="8.5" cy="8.5" r="8.5" fill="#e8505b"/><path d="M5 5 L12 12 M12 5 L5 12" stroke="#1f1f1f" stroke-width="1.6"/></svg>
<div class="a" style="left:249px;top:738px;font-size:15px;line-height:20px;color:#f0f0f0">错误 1</div>
<div class="b" style="left:306px;top:738px;width:1px;height:22px;background:#3d3d3d"></div>
<svg style="left:315px;top:740px" width="18" height="16"><path d="M9 0 L18 16 H0 Z" fill="#f3cb6b"/><path d="M9 5 V11 M9 12 V14.5" stroke="#1f1f1f" stroke-width="1.8"/></svg>
<div class="a" style="left:340px;top:738px;font-size:15px;line-height:20px;color:#e0e0e0">展示 7</div>
<div class="b" style="left:1632px;top:735px;width:245px;height:26px;background:#333;border:1px solid #3d3d3d"></div>
<div class="a" style="left:1638px;top:738px;font-size:15px;line-height:20px;color:#c8c8c8">搜索错误列表</div>
<svg style="left:1843px;top:740px" width="16" height="16"><circle cx="10" cy="6" r="4.5" fill="none" stroke="#ccc" stroke-width="2"/><path d="M7 9 L1 15" stroke="#ccc" stroke-width="2.4"/></svg>
<svg style="left:1864px;top:746px" width="8" height="5"><path d="M0 0 H8 L4 4 Z" fill="#ccc"/></svg>
<div class="b" style="left:17px;top:792px;width:1860px;height:1px;background:#333"></div>
<div class="b" style="left:42px;top:767px;width:1px;height:25px;background:#3a3a3a"></div>
<div class="b" style="left:70px;top:767px;width:1px;height:25px;background:#3a3a3a"></div>
<div class="b" style="left:102px;top:767px;width:1px;height:25px;background:#3a3a3a"></div>
<div class="b" style="left:165px;top:767px;width:1px;height:25px;background:#3a3a3a"></div>
<div class="b" style="left:1557px;top:767px;width:1px;height:25px;background:#3a3a3a"></div>
<div class="b" style="left:1742px;top:767px;width:1px;height:25px;background:#3a3a3a"></div>
<div class="b" style="left:1787px;top:767px;width:1px;height:25px;background:#3a3a3a"></div>
<div class="b" style="left:1849px;top:767px;width:1px;height:25px;background:#3a3a3a"></div>
<svg style="left:89px;top:769px" width="9" height="8"><path d="M0 1 H2 M3 1 H5 M6 1 H8 M3 4 H5 M6 4 H8 M6 7 H8" stroke="#ccc" stroke-width="1.5"/></svg>
<div class="a" style="left:108px;top:769px;font-size:15px;line-height:20px;color:#e0e0e0">代码</div>
<div class="a" style="left:170px;top:769px;font-size:15px;line-height:20px;color:#e0e0e0">说明</div>
<div class="a" style="left:1560px;top:769px;font-size:15px;line-height:20px;color:#e0e0e0">文件</div>
<div class="a" style="left:1747px;top:769px;font-size:15px;line-height:20px;color:#e0e0e0">行</div>
<div class="a" style="left:1792px;top:769px;font-size:15px;line-height:20px;color:#e0e0e0">详细...</div>
<div class="a" style="left:79px;top:797px;font-size:11px;line-height:12px;font-weight:bold;color:#bbb">abc</div>
<div class="b" style="left:79px;top:810px;width:17px;height:2px;background:repeating-linear-gradient(90deg,#e8505b 0 2px,transparent 2px 3px)"></div>
<div class="a" style="left:108px;top:796px;font-size:15.5px;line-height:20px;color:#5a9fdc">E0135</div>
<div class="a" style="left:170px;top:796px;font-size:16px;line-height:20px;color:#e0e0e0">类 "Ui::mainwindowClass" 没有成员</div>
<div class="a" style="left:1560px;top:795px;font-size:16px;line-height:20px;color:#e0e0e0">mainwindow.cpp</div>
<div class="a" style="left:1747px;top:795px;font-size:16px;line-height:20px;color:#e0e0e0">27</div>
<div class="b" style="left:1912px;top:118px;width:8px;height:135px;background:#2d2d2d"></div>
<div class="b" style="left:1912px;top:263px;width:8px;height:57px;background:#2d2d2d"></div>
<div class="a" style="left:1906px;top:118px;transform-origin:0 0;transform:rotate(90deg);font-size:15px;line-height:18px;color:#c8c8c8">解决方案资源管理器</div>
<div class="a" style="left:1906px;top:267px;transform-origin:0 0;transform:rotate(90deg);font-size:15px;line-height:18px;color:#c8c8c8">Git 更改</div>
<div class="b" style="left:0;top:990px;width:1920px;height:30px;background:#891b2e"></div>
<svg style="left:5px;top:995px" width="22" height="21"><path d="M1 1 H19 V16 H13 L10 19.5 L7 16 H1 Z" fill="#9c3a4c" stroke="#f4f4f4" stroke-width="1.3"/></svg>
<div class="a" style="left:35px;top:995px;font-size:15px;line-height:20px;color:#f4f4f4">就绪</div>
<svg style="left:1561px;top:996px" width="14" height="18"><path d="M7 18 V1 M1 7 L7 1 L13 7" fill="none" stroke="#f0f0f0" stroke-width="1.3"/></svg>
<div class="a" style="left:1585px;top:995px;font-size:15px;line-height:20px;color:#f4f4f4">添加到源代码管理</div>
<svg style="left:1714px;top:1002px" width="10" height="6"><path d="M0 6 L5 0 L10 6 Z" fill="#f0f0f0"/></svg>
<svg style="left:1752px;top:996px" width="18" height="17"><rect x="1" y="1" width="16" height="4" fill="none" stroke="#f0f0f0" stroke-width="1.3"/><path d="M2 5 V16 H16 V5 M6 8 V12 H12 V8" fill="none" stroke="#f0f0f0" stroke-width="1.3"/></svg>
<div class="a" style="left:1778px;top:995px;font-size:15px;line-height:20px;color:#f4f4f4">选择仓库</div>
<svg style="left:1846px;top:1002px" width="10" height="6"><path d="M0 6 L5 0 L10 6 Z" fill="#f0f0f0"/></svg>
<svg style="left:1880px;top:994px" width="20" height="20"><path d="M3 15 V8 Q3 2 9 2 Q15 2 15 8 V15 M1 15 H17 M7 17 Q9 19 11 17" fill="none" stroke="#f0f0f0" stroke-width="1.3"/></svg>
<div class="b" style="left:1890px;top:1003px;width:15px;height:15px;border-radius:50%;background:#f4a0a8"></div>
<div class="a" style="left:1890px;top:1003px;width:15px;text-align:center;font-size:11px;line-height:15px;color:#5a1020">1</div>
<div class="b" style="left:380px;top:99px;width:1170px;height:837px;border-radius:8px;background:#f0f0f0;overflow:hidden;border:1px solid #fafafa;color:#000;box-shadow:0 3px 12px rgba(0,0,0,0.45)">
<div class="b" style="left:-1px;top:-1px;width:1170px;height:37px;background:#e4f6f5"></div>
<svg style="left:8px;top:9px" width="20" height="16"><rect x="0.5" y="0.5" width="18" height="14" fill="#f4f4f4" stroke="#9aa" stroke-width="1"/><rect x="2" y="2" width="8" height="11" fill="#3a9a6a"/><rect x="2" y="2" width="8" height="5" fill="#4a8ab0" opacity="0.6"/><rect x="15" y="2" width="1.5" height="6" fill="#3a8ab0"/></svg>
<div class="a" style="left:34px;top:7px;font-size:15px;line-height:20px;color:#1a1a1a">企业员工管理系统</div>
<div class="b" style="left:1016px;top:16px;width:13px;height:1px;background:#222"></div>
<svg style="left:1074px;top:11px" width="13" height="13"><rect x="0.75" y="0.75" width="11.5" height="11.5" fill="none" stroke="#222" stroke-width="1.3"/></svg>
<svg style="left:1132px;top:11px" width="13" height="13"><path d="M0.5 0.5 L12.5 12.5 M12.5 0.5 L0.5 12.5" stroke="#222" stroke-width="1.3"/></svg>
<div class="b" style="left:134px;top:55px;width:89px;height:26px;background:#f0f0f0;border:1px solid #e0e0e0;border-bottom:none"></div>
<div class="b" style="left:222px;top:55px;width:73px;height:26px;background:#f0f0f0;border:1px solid #e0e0e0;border-bottom:none"></div>
<div class="b" style="left:13px;top:80px;width:1137px;height:735px;background:#f9f9f9;border:1px solid #e3e3e3"></div>
<div class="b" style="left:13px;top:52px;width:122px;height:30px;background:#f9f9f9;border:1px solid #e3e3e3;border-bottom:none"></div>
<div class="a" style="left:27px;top:57px;font-size:15px;line-height:20px;color:#1a1a1a">员工管理页面</div>
<div class="a" style="left:147px;top:58px;font-size:15px;line-height:20px;color:#1a1a1a">高级查找</div>
<div class="a" style="left:237px;top:58px;font-size:15px;line-height:20px;color:#1a1a1a">分布图</div>
<div class="a" style="left:28px;top:99px;font-size:15px;line-height:20px;color:#1a1a1a">姓名</div>
<div class="a" style="left:28px;top:132px;font-size:15px;line-height:20px;color:#1a1a1a">生日</div>
<div class="a" style="left:28px;top:165px;font-size:15px;line-height:20px;color:#1a1a1a">身份证号</div>
<div class="a" style="left:300px;top:132px;font-size:15px;line-height:20px;color:#1a1a1a">性别</div>
<div class="a" style="left:471px;top:99px;font-size:15px;line-height:20px;color:#1a1a1a">等级</div>
<div class="a" style="left:471px;top:133px;font-size:15px;line-height:20px;color:#1a1a1a">薪水</div>
<div class="a" style="left:471px;top:166px;font-size:15px;line-height:20px;color:#1a1a1a">电话</div>
<div class="b" style="left:97px;top:96px;width:366px;height:25px;background:#ffffff;border:1px solid #e6e6e6;border-bottom:1px solid #8a8a8a;border-radius:4px"></div>
<div class="b" style="left:97px;top:163px;width:366px;height:24px;background:#ffffff;border:1px solid #e6e6e6;border-bottom:1px solid #8a8a8a;border-radius:4px"></div>
<div class="b" style="left:509px;top:165px;width:399px;height:24px;background:#ffffff;border:1px solid #e6e6e6;border-bottom:1px solid #8a8a8a;border-radius:4px"></div>
<div class="b" style="left:97px;top:134px;width:16px;height:16px;background:#f3f3f3;border:1px solid #8a8a8a;border-radius:3px"></div>
<div class="b" style="left:184px;top:130px;width:108px;height:24px;background:#ffffff;border:1px solid #e6e6e6;border-bottom:1px solid #8a8a8a;border-radius:4px"></div>
<div class="a" style="left:186px;top:131px;font-size:16px;line-height:22px;letter-spacing:0.4px;color:#1a1a1a">2000/1/1</div>
<div class="b" style="left:273px;top:131px;width:17px;height:22px;background:#eaeaea;border:1px solid #cfcfcf"></div>
<div class="b" style="left:274px;top:141px;width:16px;height:1px;background:#cfcfcf"></div>
<svg style="left:278px;top:134px" width="8" height="5"><path d="M0 5 L4 0 L8 5 Z" fill="#111"/></svg>
<svg style="left:278px;top:145px" width="8" height="5"><path d="M0 0 L4 5 L8 0 Z" fill="#111"/></svg>
<div class="b" style="left:385px;top:130px;width:79px;height:25px;background:#fdfdfd;border:1px solid #dcdcdc;border-bottom-color:#c6c6c6;border-radius:4px"></div>
<div class="a" style="left:390px;top:133px;font-size:15px;line-height:20px;color:#1a1a1a">请选择</div>
<svg style="left:447px;top:139px" width="10" height="6"><path d="M0.5 0.5 L5 5 L9.5 0.5" fill="none" stroke="#333" stroke-width="1"/></svg>
<div class="b" style="left:509px;top:97px;width:399px;height:25px;background:#fdfdfd;border:1px solid #dcdcdc;border-bottom-color:#c6c6c6;border-radius:4px"></div>
<div class="a" style="left:514px;top:100px;font-size:15px;line-height:20px;color:#1a1a1a">请选择</div>
<svg style="left:891px;top:106px" width="10" height="6"><path d="M0.5 0.5 L5 5 L9.5 0.5" fill="none" stroke="#333" stroke-width="1"/></svg>
<div class="b" style="left:509px;top:131px;width:399px;height:25px;background:#fdfdfd;border:1px solid #dcdcdc;border-bottom-color:#c6c6c6;border-radius:4px"></div>
<div class="a" style="left:514px;top:134px;font-size:15px;line-height:20px;color:#1a1a1a">请选择</div>
<svg style="left:891px;top:140px" width="10" height="6"><path d="M0.5 0.5 L5 5 L9.5 0.5" fill="none" stroke="#333" stroke-width="1"/></svg>
<div class="b" style="left:916px;top:108px;width:216px;height:27px;background:#fdfdfd;border:1px solid #d0d0d0;border-bottom-color:#c0c0c0;border-radius:4px"></div>
<div class="a" style="left:916px;top:111px;width:216px;text-align:center;font-size:15px;line-height:20px;color:#1a1a1a">查找</div>
<div class="b" style="left:916px;top:148px;width:216px;height:27px;background:#fdfdfd;border:1px solid #d0d0d0;border-bottom-color:#c0c0c0;border-radius:4px"></div>
<div class="a" style="left:916px;top:151px;width:216px;text-align:center;font-size:15px;line-height:20px;color:#1a1a1a">清除</div>
<div class="b" style="left:30px;top:768px;width:92px;height:28px;background:#fdfdfd;border:1px solid #d0d0d0;border-bottom-color:#c0c0c0;border-radius:4px"></div>
<div class="a" style="left:30px;top:772px;width:92px;text-align:center;font-size:15px;line-height:20px;color:#1a1a1a">添加</div>
<div class="b" style="left:131px;top:768px;width:92px;height:28px;background:#fdfdfd;border:1px solid #d0d0d0;border-bottom-color:#c0c0c0;border-radius:4px"></div>
<div class="a" style="left:131px;top:772px;width:92px;text-align:center;font-size:15px;line-height:20px;color:#1a1a1a">查看/编辑</div>
<div class="b" style="left:233px;top:768px;width:92px;height:28px;background:#fdfdfd;border:1px solid #d0d0d0;border-bottom-color:#c0c0c0;border-radius:4px"></div>
<div class="a" style="left:233px;top:772px;width:92px;text-align:center;font-size:15px;line-height:20px;color:#1a1a1a">删除</div>
<div class="b" style="left:334px;top:768px;width:92px;height:28px;background:#fdfdfd;border:1px solid #d0d0d0;border-bottom-color:#c0c0c0;border-radius:4px"></div>
<div class="a" style="left:334px;top:772px;width:92px;text-align:center;font-size:15px;line-height:20px;color:#1a1a1a">导出Excel</div>
<div class="b" style="left:435px;top:768px;width:92px;height:28px;background:#fdfdfd;border:1px solid #d0d0d0;border-bottom-color:#c0c0c0;border-radius:4px"></div>
<div class="a" style="left:435px;top:772px;width:92px;text-align:center;font-size:15px;line-height:20px;color:#1a1a1a">导入Excel</div>
<div class="b" style="left:838px;top:768px;width:92px;height:28px;background:#fdfdfd;border:1px solid #d0d0d0;border-bottom-color:#c0c0c0;border-radius:4px"></div>
<div class="a" style="left:838px;top:772px;width:92px;text-align:center;font-size:15px;line-height:20px;color:#1a1a1a">注销账号</div>
<div class="b" style="left:939px;top:768px;width:92px;height:28px;background:#fdfdfd;border:1px solid #d0d0d0;border-bottom-color:#c0c0c0;border-radius:4px"></div>
<div class="a" style="left:939px;top:772px;width:92px;text-align:center;font-size:15px;line-height:20px;color:#1a1a1a">退出登录</div>
<div class="b" style="left:1040px;top:768px;width:92px;height:28px;background:#fdfdfd;border:1px solid #d0d0d0;border-bottom-color:#c0c0c0;border-radius:4px"></div>
<div class="a" style="left:1040px;top:772px;width:92px;text-align:center;font-size:15px;line-height:20px;color:#1a1a1a">个人信息</div>
<div class="b" style="left:29px;top:196px;width:1104px;height:562px;background:#ffffff;border:1px solid #8e969e"></div>
<div class="b" style="left:59px;top:227px;width:1051px;height:510px;background:#d2f8dc"></div>
<div class="b" style="left:0;top:0;width:1170px;height:836px;pointer-events:none">
<div class="b" style="left:797px;top:233px;width:38px;height:48px;border-radius:50%;background:rgba(255,255,255,0.35);transform:rotate(-20deg)"></div>
<div class="b" style="left:841px;top:235px;width:30px;height:20px;border-radius:50%;background:rgba(255,255,255,0.35);transform:rotate(-10deg)"></div>
<div class="b" style="left:842px;top:260px;width:30px;height:20px;border-radius:50%;background:rgba(255,255,255,0.35);transform:rotate(10deg)"></div>
<div class="b" style="left:821px;top:225px;width:24px;height:14px;border-radius:50%;background:rgba(255,255,255,0.35);transform:rotate(0deg)"></div>
<div class="b" style="left:821px;top:277px;width:24px;height:18px;border-radius:50%;background:rgba(255,255,255,0.35);transform:rotate(0deg)"></div>
<svg style="left:119px;top:585px" width="110" height="95" viewBox="0 0 110 95"><path d="M50 3 Q55 0 60 6 L70 30 L100 32 Q108 34 102 42 L80 60 L92 88 Q92 94 85 90 L55 75 L25 90 Q17 93 19 86 L30 60 L5 42 Q0 36 8 33 L38 30 Z" fill="rgba(255,255,255,0.4)"/></svg>
<svg style="left:147px;top:283px" width="50" height="70" viewBox="0 0 50 70"><path d="M10 5 Q25 -2 30 15 L45 65 M5 10 Q0 30 15 35 L25 30" fill="none" stroke="rgba(255,255,255,0.45)" stroke-width="4"/></svg>
</div>
<div class="b" style="left:59px;top:256px;width:1051px;height:1px;background:#d8d4d8"></div>
<div class="b" style="left:59px;top:286px;width:1051px;height:1px;background:#d8d4d8"></div>
<div class="b" style="left:59px;top:316px;width:1051px;height:1px;background:#d8d4d8"></div>
<div class="b" style="left:59px;top:346px;width:1051px;height:1px;background:#d8d4d8"></div>
<div class="b" style="left:59px;top:376px;width:1051px;height:1px;background:#d8d4d8"></div>
<div class="b" style="left:59px;top:406px;width:1051px;height:1px;background:#d8d4d8"></div>
<div class="b" style="left:59px;top:436px;width:1051px;height:1px;background:#d8d4d8"></div>
<div class="b" style="left:59px;top:466px;width:1051px;height:1px;background:#d8d4d8"></div>
<div class="b" style="left:59px;top:496px;width:1051px;height:1px;background:#d8d4d8"></div>
<div class="b" style="left:59px;top:526px;width:1051px;height:1px;background:#d8d4d8"></div>
<div class="b" style="left:59px;top:556px;width:1051px;height:1px;background:#d8d4d8"></div>
<div class="b" style="left:59px;top:586px;width:1051px;height:1px;background:#d8d4d8"></div>
<div class="b" style="left:59px;top:616px;width:1051px;height:1px;background:#d8d4d8"></div>
<div class="b" style="left:59px;top:646px;width:1051px;height:1px;background:#d8d4d8"></div>
<div class="b" style="left:59px;top:676px;width:1051px;height:1px;background:#d8d4d8"></div>
<div class="b" style="left:59px;top:706px;width:1051px;height:1px;background:#d8d4d8"></div>
<div class="b" style="left:59px;top:736px;width:1051px;height:1px;background:#d8d4d8"></div>
<div class="b" style="left:113px;top:197px;width:1px;height:30px;background:#e4e4e4"></div>
<div class="b" style="left:113px;top:227px;width:1px;height:510px;background:#d8d4d8"></div>
<div class="b" style="left:151px;top:197px;width:1px;height:30px;background:#e4e4e4"></div>
<div class="b" style="left:151px;top:227px;width:1px;height:510px;background:#d8d4d8"></div>
<div class="b" style="left:318px;top:197px;width:1px;height:30px;background:#e4e4e4"></div>
<div class="b" style="left:318px;top:227px;width:1px;height:510px;background:#d8d4d8"></div>
<div class="b" style="left:404px;top:197px;width:1px;height:30px;background:#e4e4e4"></div>
<div class="b" style="left:404px;top:227px;width:1px;height:510px;background:#d8d4d8"></div>
<div class="b" style="left:563px;top:197px;width:1px;height:30px;background:#e4e4e4"></div>
<div class="b" style="left:563px;top:227px;width:1px;height:510px;background:#d8d4d8"></div>
<div class="b" style="left:688px;top:197px;width:1px;height:30px;background:#e4e4e4"></div>
<div class="b" style="left:688px;top:227px;width:1px;height:510px;background:#d8d4d8"></div>
<div class="b" style="left:749px;top:197px;width:1px;height:30px;background:#e4e4e4"></div>
<div class="b" style="left:749px;top:227px;width:1px;height:510px;background:#d8d4d8"></div>
<div class="b" style="left:58px;top:197px;width:1px;height:30px;background:#e4e4e4"></div>
<div class="a" style="left:-14px;top:202px;width:200px;text-align:center;font-size:16.5px;line-height:20px;color:#111">Name</div>
<div class="a" style="left:32px;top:202px;width:200px;text-align:center;font-size:16.5px;line-height:20px;color:#111">Sex</div>
<div class="a" style="left:135px;top:202px;width:200px;text-align:center;font-size:16.5px;line-height:20px;color:#111">ID Card</div>
<div class="a" style="left:261px;top:202px;width:200px;text-align:center;font-size:16.5px;line-height:20px;color:#111">Birth</div>
<div class="a" style="left:384px;top:202px;width:200px;text-align:center;font-size:16.5px;line-height:20px;color:#111">Address</div>
<div class="a" style="left:526px;top:202px;width:200px;text-align:center;font-size:16.5px;line-height:20px;color:#111">Phone Number</div>
<div class="a" style="left:619px;top:202px;width:200px;text-align:center;font-size:16.5px;line-height:20px;color:#111">Wages</div>
<div class="a" style="left:841px;top:202px;width:200px;text-align:center;font-size:16.5px;line-height:20px;color:#111">Rank</div>
<div class="a" style="left:35px;top:233px;font-size:15.7px;line-height:20px;color:#111">1</div>
<div class="a" style="left:62px;top:232px;font-size:15px;line-height:20px;color:#111">张三</div>
<div class="a" style="left:118px;top:232px;font-size:15px;line-height:20px;color:#111">男</div>
<div class="a" style="left:155px;top:232px;font-size:15.7px;line-height:20px;color:#111">110101198901013456</div>
<div class="a" style="left:323px;top:232px;font-size:15.7px;line-height:20px;color:#111">1989.01.01</div>
<div class="a" style="left:408px;top:232px;font-size:15px;line-height:20px;color:#111">北京市朝阳区某街道</div>
<div class="a" style="left:568px;top:232px;font-size:15.7px;line-height:20px;color:#111">13812345678</div>
<div class="a" style="left:693px;top:232px;font-size:15.7px;line-height:20px;color:#111">3000</div>
<div class="a" style="left:754px;top:232px;font-size:15px;line-height:20px;color:#111">1级</div>
<div class="a" style="left:35px;top:263px;font-size:15.7px;line-height:20px;color:#111">2</div>
<div class="a" style="left:62px;top:262px;font-size:15px;line-height:20px;color:#111">李四</div>
<div class="a" style="left:118px;top:262px;font-size:15px;line-height:20px;color:#111">女</div>
<div class="a" style="left:155px;top:262px;font-size:15.7px;line-height:20px;color:#111">110102198802022345</div>
<div class="a" style="left:323px;top:262px;font-size:15.7px;line-height:20px;color:#111">2006.02.02</div>
<div class="a" style="left:408px;top:262px;font-size:15px;line-height:20px;color:#111">北京市海淀区某小区</div>
<div class="a" style="left:568px;top:262px;font-size:15.7px;line-height:20px;color:#111">13923456789</div>
<div class="a" style="left:693px;top:262px;font-size:15.7px;line-height:20px;color:#111">6000</div>
<div class="a" style="left:754px;top:262px;font-size:15px;line-height:20px;color:#111">2级</div>
<div class="a" style="left:35px;top:293px;font-size:15.7px;line-height:20px;color:#111">3</div>
<div class="a" style="left:62px;top:292px;font-size:15px;line-height:20px;color:#111">王五</div>
<div class="a" style="left:118px;top:292px;font-size:15px;line-height:20px;color:#111">男</div>
<div class="a" style="left:155px;top:292px;font-size:15.7px;line-height:20px;color:#111">110103198803033234</div>
<div class="a" style="left:323px;top:292px;font-size:15.7px;line-height:20px;color:#111">1999.03.03</div>
<div class="a" style="left:408px;top:292px;font-size:15px;line-height:20px;color:#111">上海市浦东新区某大厦</div>
<div class="a" style="left:568px;top:292px;font-size:15.7px;line-height:20px;color:#111">13734567890</div>
<div class="a" style="left:693px;top:292px;font-size:15.7px;line-height:20px;color:#111">9500</div>
<div class="a" style="left:754px;top:292px;font-size:15px;line-height:20px;color:#111">3级</div>
<div class="a" style="left:35px;top:323px;font-size:15.7px;line-height:20px;color:#111">4</div>
<div class="a" style="left:62px;top:322px;font-size:15px;line-height:20px;color:#111">赵六</div>
<div class="a" style="left:118px;top:322px;font-size:15px;line-height:20px;color:#111">女</div>
<div class="a" style="left:155px;top:322px;font-size:15.7px;line-height:20px;color:#111">110104198804044567</div>
<div class="a" style="left:323px;top:322px;font-size:15.7px;line-height:20px;color:#111">1988.04.04</div>
<div class="a" style="left:408px;top:322px;font-size:15px;line-height:20px;color:#111">广州市天河区某住宅</div>
<div class="a" style="left:568px;top:322px;font-size:15.7px;line-height:20px;color:#111">13645678901</div>
<div class="a" style="left:693px;top:322px;font-size:15.7px;line-height:20px;color:#111">8500</div>
<div class="a" style="left:754px;top:322px;font-size:15px;line-height:20px;color:#111">4级</div>
<div class="a" style="left:35px;top:353px;font-size:15.7px;line-height:20px;color:#111">5</div>
<div class="a" style="left:62px;top:352px;font-size:15px;line-height:20px;color:#111">孙七</div>
<div class="a" style="left:118px;top:352px;font-size:15px;line-height:20px;color:#111">男</div>
<div class="a" style="left:155px;top:352px;font-size:15.7px;line-height:20px;color:#111">110105198805055678</div>
<div class="a" style="left:323px;top:352px;font-size:15.7px;line-height:20px;color:#111">2003.05.05</div>
<div class="a" style="left:408px;top:352px;font-size:15px;line-height:20px;color:#111">深圳市南山区某公司</div>
<div class="a" style="left:568px;top:352px;font-size:15.7px;line-height:20px;color:#111">13556789012</div>
<div class="a" style="left:693px;top:352px;font-size:15.7px;line-height:20px;color:#111">10000</div>
<div class="a" style="left:754px;top:352px;font-size:15px;line-height:20px;color:#111">5级</div>
<div class="a" style="left:35px;top:383px;font-size:15.7px;line-height:20px;color:#111">6</div>
<div class="a" style="left:62px;top:382px;font-size:15px;line-height:20px;color:#111">陈静</div>
<div class="a" style="left:118px;top:382px;font-size:15px;line-height:20px;color:#111">女</div>
<div class="a" style="left:155px;top:382px;font-size:15.7px;line-height:20px;color:#111">110106198806066789</div>
<div class="a" style="left:323px;top:382px;font-size:15.7px;line-height:20px;color:#111">1988.06.06</div>
<div class="a" style="left:408px;top:382px;font-size:15px;line-height:20px;color:#111">武汉市洪山区某大学</div>
<div class="a" style="left:568px;top:382px;font-size:15.7px;line-height:20px;color:#111">13967890123</div>
<div class="a" style="left:693px;top:382px;font-size:15.7px;line-height:20px;color:#111">9200</div>
<div class="a" style="left:754px;top:382px;font-size:15px;line-height:20px;color:#111">1级</div>
<div class="a" style="left:35px;top:413px;font-size:15.7px;line-height:20px;color:#111">7</div>
<div class="a" style="left:62px;top:412px;font-size:15px;line-height:20px;color:#111">杨涛</div>
<div class="a" style="left:118px;top:412px;font-size:15px;line-height:20px;color:#111">男</div>
<div class="a" style="left:155px;top:412px;font-size:15.7px;line-height:20px;color:#111">110107198807077890</div>
<div class="a" style="left:323px;top:412px;font-size:15.7px;line-height:20px;color:#111">1988.07.07</div>
<div class="a" style="left:408px;top:412px;font-size:15px;line-height:20px;color:#111">天津市和平区某商场</div>
<div class="a" style="left:568px;top:412px;font-size:15.7px;line-height:20px;color:#111">13878901234</div>
<div class="a" style="left:693px;top:412px;font-size:15.7px;line-height:20px;color:#111">8800</div>
<div class="a" style="left:754px;top:412px;font-size:15px;line-height:20px;color:#111">2级</div>
<div class="a" style="left:35px;top:443px;font-size:15.7px;line-height:20px;color:#111">8</div>
<div class="a" style="left:62px;top:442px;font-size:15px;line-height:20px;color:#111">吴玲</div>
<div class="a" style="left:118px;top:442px;font-size:15px;line-height:20px;color:#111">女</div>
<div class="a" style="left:155px;top:442px;font-size:15.7px;line-height:20px;color:#111">110108198808088901</div>
<div class="a" style="left:323px;top:442px;font-size:15.7px;line-height:20px;color:#111">2005.08.08</div>
<div class="a" style="left:408px;top:442px;font-size:15px;line-height:20px;color:#111">成都市锦江区某写字楼</div>
<div class="a" style="left:568px;top:442px;font-size:15.7px;line-height:20px;color:#111">13789012345</div>
<div class="a" style="left:693px;top:442px;font-size:15.7px;line-height:20px;color:#111">8500</div>
<div class="a" style="left:754px;top:442px;font-size:15px;line-height:20px;color:#111">3级</div>
<div class="a" style="left:35px;top:473px;font-size:15.7px;line-height:20px;color:#111">9</div>
<div class="a" style="left:62px;top:472px;font-size:15px;line-height:20px;color:#111">周强</div>
<div class="a" style="left:118px;top:472px;font-size:15px;line-height:20px;color:#111">男</div>
<div class="a" style="left:155px;top:472px;font-size:15.7px;line-height:20px;color:#111">110109198809099012</div>
<div class="a" style="left:323px;top:472px;font-size:15.7px;line-height:20px;color:#111">1988.09.09</div>
<div class="a" style="left:408px;top:472px;font-size:15px;line-height:20px;color:#111">重庆市渝中区某市场</div>
<div class="a" style="left:568px;top:472px;font-size:15.7px;line-height:20px;color:#111">13690123456</div>
<div class="a" style="left:693px;top:472px;font-size:15.7px;line-height:20px;color:#111">9200</div>
<div class="a" style="left:754px;top:472px;font-size:15px;line-height:20px;color:#111">4级</div>
<div class="a" style="left:35px;top:503px;font-size:15.7px;line-height:20px;color:#111">10</div>
<div class="a" style="left:62px;top:502px;font-size:15px;line-height:20px;color:#111">刘婷</div>
<div class="a" style="left:118px;top:502px;font-size:15px;line-height:20px;color:#111">女</div>
<div class="a" style="left:155px;top:502px;font-size:15.7px;line-height:20px;color:#111">110110198810101123</div>
<div class="a" style="left:323px;top:502px;font-size:15.7px;line-height:20px;color:#111">1992.10.10</div>
<div class="a" style="left:408px;top:502px;font-size:15px;line-height:20px;color:#111">南京市鼓楼区某工厂</div>
<div class="a" style="left:568px;top:502px;font-size:15.7px;line-height:20px;color:#111">13501234567</div>
<div class="a" style="left:693px;top:502px;font-size:15.7px;line-height:20px;color:#111">9300</div>
<div class="a" style="left:754px;top:502px;font-size:15px;line-height:20px;color:#111">5级</div>
<div class="a" style="left:35px;top:533px;font-size:15.7px;line-height:20px;color:#111">11</div>
<div class="a" style="left:62px;top:532px;font-size:15px;line-height:20px;color:#111">唐伟</div>
<div class="a" style="left:118px;top:532px;font-size:15px;line-height:20px;color:#111">男</div>
<div class="a" style="left:155px;top:532px;font-size:15.7px;line-height:20px;color:#111">110111198811111234</div>
<div class="a" style="left:323px;top:532px;font-size:15.7px;line-height:20px;color:#111">1999.01.01</div>
<div class="a" style="left:408px;top:532px;font-size:15px;line-height:20px;color:#111">郑州市金水区某超市</div>
<div class="a" style="left:568px;top:532px;font-size:15.7px;line-height:20px;color:#111">13412345678</div>
<div class="a" style="left:693px;top:532px;font-size:15.7px;line-height:20px;color:#111">9100</div>
<div class="a" style="left:754px;top:532px;font-size:15px;line-height:20px;color:#111">6级</div>
<div class="a" style="left:35px;top:563px;font-size:15.7px;line-height:20px;color:#111">12</div>
<div class="a" style="left:62px;top:562px;font-size:15px;line-height:20px;color:#111">韩雪</div>
<div class="a" style="left:118px;top:562px;font-size:15px;line-height:20px;color:#111">女</div>
<div class="a" style="left:155px;top:562px;font-size:15.7px;line-height:20px;color:#111">110112198812122345</div>
<div class="a" style="left:323px;top:562px;font-size:15.7px;line-height:20px;color:#111">1988.02.02</div>
<div class="a" style="left:408px;top:562px;font-size:15px;line-height:20px;color:#111">哈尔滨市南岗区某商店</div>
<div class="a" style="left:568px;top:562px;font-size:15.7px;line-height:20px;color:#111">13323456789</div>
<div class="a" style="left:693px;top:562px;font-size:15.7px;line-height:20px;color:#111">8700</div>
<div class="a" style="left:754px;top:562px;font-size:15px;line-height:20px;color:#111">5级</div>
<div class="a" style="left:35px;top:593px;font-size:15.7px;line-height:20px;color:#111">13</div>
<div class="a" style="left:62px;top:592px;font-size:15px;line-height:20px;color:#111">黄飞</div>
<div class="a" style="left:118px;top:592px;font-size:15px;line-height:20px;color:#111">男</div>
<div class="a" style="left:155px;top:592px;font-size:15.7px;line-height:20px;color:#111">110113198901013456</div>
<div class="a" style="left:323px;top:592px;font-size:15.7px;line-height:20px;color:#111">1999.03.03</div>
<div class="a" style="left:408px;top:592px;font-size:15px;line-height:20px;color:#111">沈阳市铁西区某学校</div>
<div class="a" style="left:568px;top:592px;font-size:15.7px;line-height:20px;color:#111">13234567890</div>
<div class="a" style="left:693px;top:592px;font-size:15.7px;line-height:20px;color:#111">9500</div>
<div class="a" style="left:754px;top:592px;font-size:15px;line-height:20px;color:#111">4级</div>
<div class="a" style="left:35px;top:623px;font-size:15.7px;line-height:20px;color:#111">14</div>
<div class="a" style="left:62px;top:622px;font-size:15px;line-height:20px;color:#111">冯伟</div>
<div class="a" style="left:118px;top:622px;font-size:15px;line-height:20px;color:#111">男</div>
<div class="a" style="left:155px;top:622px;font-size:15.7px;line-height:20px;color:#111">110114198902023567</div>
<div class="a" style="left:323px;top:622px;font-size:15.7px;line-height:20px;color:#111">2000.04.04</div>
<div class="a" style="left:408px;top:622px;font-size:15px;line-height:20px;color:#111">济南市历下区某医院</div>
<div class="a" style="left:568px;top:622px;font-size:15.7px;line-height:20px;color:#111">13145678901</div>
<div class="a" style="left:693px;top:622px;font-size:15.7px;line-height:20px;color:#111">9800</div>
<div class="a" style="left:754px;top:622px;font-size:15px;line-height:20px;color:#111">2级</div>
<div class="a" style="left:35px;top:653px;font-size:15.7px;line-height:20px;color:#111">15</div>
<div class="a" style="left:62px;top:652px;font-size:15px;line-height:20px;color:#111">董晨</div>
<div class="a" style="left:118px;top:652px;font-size:15px;line-height:20px;color:#111">女</div>
<div class="a" style="left:155px;top:652px;font-size:15.7px;line-height:20px;color:#111">110115198903034678</div>
<div class="a" style="left:323px;top:652px;font-size:15.7px;line-height:20px;color:#111">2003.05.05</div>
<div class="a" style="left:408px;top:652px;font-size:15px;line-height:20px;color:#111">西安市碑林区某商场</div>
<div class="a" style="left:568px;top:652px;font-size:15.7px;line-height:20px;color:#111">13056789012</div>
<div class="a" style="left:693px;top:652px;font-size:15.7px;line-height:20px;color:#111">9000</div>
<div class="a" style="left:754px;top:652px;font-size:15px;line-height:20px;color:#111">3级</div>
<div class="a" style="left:35px;top:683px;font-size:15.7px;line-height:20px;color:#111">16</div>
<div class="a" style="left:62px;top:682px;font-size:15px;line-height:20px;color:#111">蒋超</div>
<div class="a" style="left:118px;top:682px;font-size:15px;line-height:20px;color:#111">男</div>
<div class="a" style="left:155px;top:682px;font-size:15.7px;line-height:20px;color:#111">110116198904045789</div>
<div class="a" style="left:323px;top:682px;font-size:15.7px;line-height:20px;color:#111">2004.06.06</div>
<div class="a" style="left:408px;top:682px;font-size:15px;line-height:20px;color:#111">苏州市姑苏区某住宅</div>
<div class="a" style="left:568px;top:682px;font-size:15.7px;line-height:20px;color:#111">13987654321</div>
<div class="a" style="left:693px;top:682px;font-size:15.7px;line-height:20px;color:#111">9800</div>
<div class="a" style="left:754px;top:682px;font-size:15px;line-height:20px;color:#111">1级</div>
<div class="a" style="left:35px;top:713px;font-size:15.7px;line-height:20px;color:#111">17</div>
<div class="a" style="left:62px;top:712px;font-size:15px;line-height:20px;color:#111">高玲</div>
<div class="a" style="left:118px;top:712px;font-size:15px;line-height:20px;color:#111">女</div>
<div class="a" style="left:155px;top:712px;font-size:15.7px;line-height:20px;color:#111">110117198905056890</div>
<div class="a" style="left:323px;top:712px;font-size:15.7px;line-height:20px;color:#111">2005.07.07</div>
<div class="a" style="left:408px;top:712px;font-size:15px;line-height:20px;color:#111">厦门市思明区某商店</div>
<div class="a" style="left:568px;top:712px;font-size:15.7px;line-height:20px;color:#111">13876543210</div>
<div class="a" style="left:693px;top:712px;font-size:15.7px;line-height:20px;color:#111">8500</div>
<div class="a" style="left:754px;top:712px;font-size:15px;line-height:20px;color:#111">3级</div>
<div class="b" style="left:1110px;top:197px;width:22px;height:540px;background:#f6f6f6"></div>
<div class="b" style="left:1110px;top:197px;width:22px;height:22px;background:#f0f0f0;border-right:1px solid #696969;border-bottom:1px solid #696969;box-shadow:inset 1px 1px 0 #fff"></div>
<svg style="left:1116px;top:205px" width="9" height="5"><path d="M0 5 L4.5 0 L9 5 Z" fill="#000"/></svg>
<div class="b" style="left:1110px;top:219px;width:22px;height:336px;background:#f0f0f0;border-right:1px solid #696969;border-bottom:1px solid #696969;box-shadow:inset 1px 1px 0 #fff"></div>
<div class="b" style="left:1110px;top:716px;width:22px;height:21px;background:#f0f0f0;border-right:1px solid #696969;border-bottom:1px solid #696969;box-shadow:inset 1px 1px 0 #fff"></div>
<svg style="left:1116px;top:724px" width="9" height="5"><path d="M0 0 L4.5 5 L9 0 Z" fill="#000"/></svg>
<div class="b" style="left:30px;top:737px;width:1080px;height:20px;background:#f6f6f6"></div>
<div class="b" style="left:30px;top:737px;width:21px;height:20px;background:#f0f0f0;border-right:1px solid #696969;border-bottom:1px solid #696969;box-shadow:inset 1px 1px 0 #fff"></div>
<svg style="left:38px;top:743px" width="5" height="9"><path d="M5 0 L0 4.5 L5 9 Z" fill="#000"/></svg>
<div class="b" style="left:51px;top:737px;width:907px;height:20px;background:#f0f0f0;border-right:1px solid #696969;border-bottom:1px solid #696969;box-shadow:inset 1px 1px 0 #fff"></div>
<div class="b" style="left:1089px;top:737px;width:21px;height:20px;background:#f0f0f0;border-right:1px solid #696969;border-bottom:1px solid #696969;box-shadow:inset 1px 1px 0 #fff"></div>
<svg style="left:1097px;top:743px" width="5" height="9"><path d="M0 0 L5 4.5 L0 9 Z" fill="#000"/></svg>
<div class="b" style="left:1110px;top:737px;width:22px;height:20px;background:#f0f0f0"></div>
</div>
</body></html>
